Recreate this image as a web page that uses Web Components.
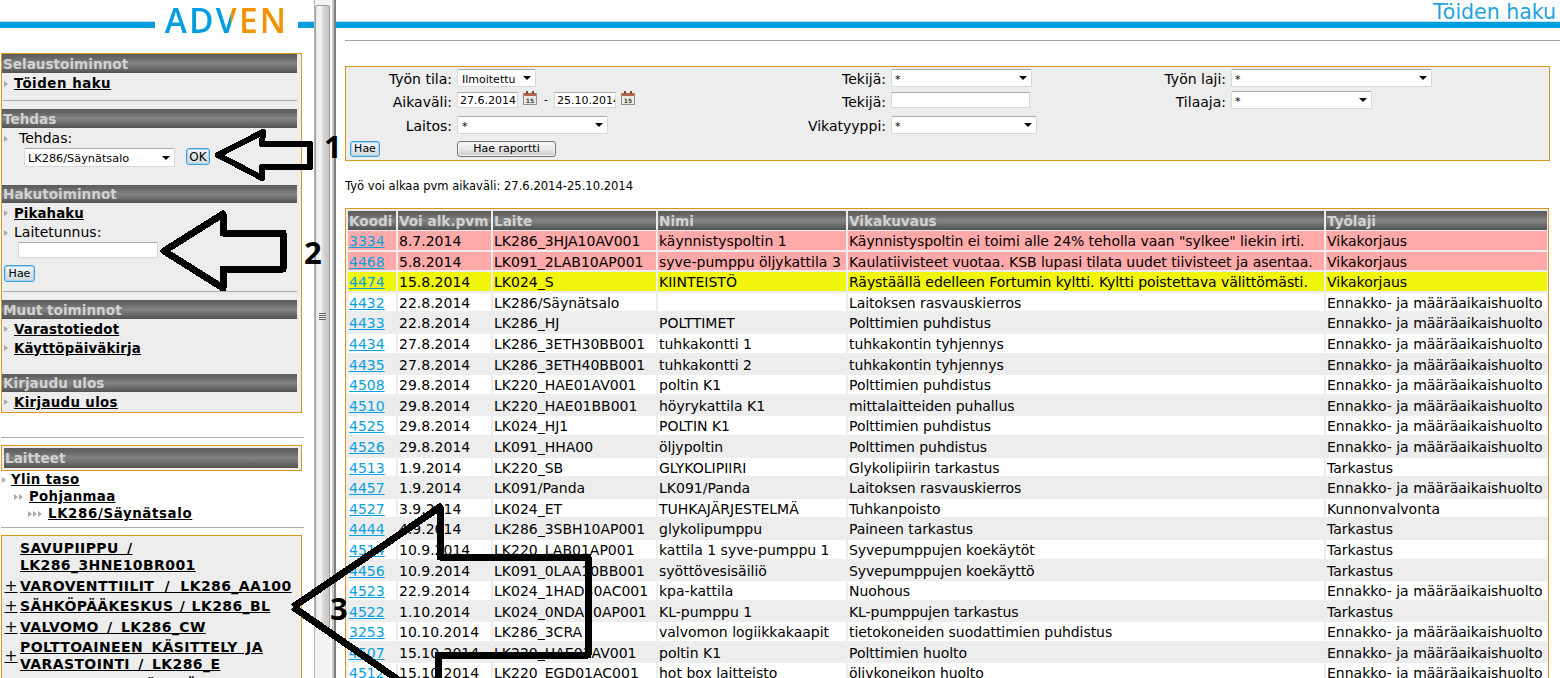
<!DOCTYPE html>
<html lang="fi"><head><meta charset="utf-8"><title>Töiden haku</title>
<style>
html,body{margin:0;padding:0;height:678px;overflow:hidden;background:#fff;font-family:"DejaVu Sans",Verdana,sans-serif;font-size:14px;color:#000}
</style></head><body>
<app-shell>
  <side-bar slot="side"></side-bar>
  <fake-scroll slot="scroll"></fake-scroll>
  <main-view slot="main"></main-view>
  <arrow-overlay slot="over"></arrow-overlay>
</app-shell>
<script>
function def(name,css,html){
  customElements.define(name,class extends HTMLElement{
    constructor(){super();this.attachShadow({mode:"open"});this._css=css;this._html=html;}
    connectedCallback(){if(!this._i){this._i=1;this.shadowRoot.innerHTML="<style>"+this._css+"</style>"+(typeof this._html==="function"?this._html(this):this._html);}}
  });
}
const HEAD=`linear-gradient(#5c5c5c,#666 20%,#858585 50%,#666 80%,#525252)`;
def("app-shell",`:host{display:grid;grid-template-columns:314px 22px 1fr;height:678px;overflow:hidden;position:relative}`,
 `<slot name="side"></slot><slot name="scroll"></slot><slot name="main"></slot><slot name="over"></slot>`);

def("panel-head",`:host{display:block;height:var(--h,19px);line-height:calc(var(--h,19px) + 1px);background:${HEAD};color:#d2d2d2;font-weight:bold;font-size:13.6px;padding-left:1px;white-space:nowrap;overflow:hidden;width:var(--w,294px);margin:var(--m,0 0 0 0)}`,`<slot></slot>`);

def("bullet-marks",`:host{display:inline-flex;gap:1px;vertical-align:middle}
 i{display:block;width:0;height:0;border-left:4px solid #aaa;border-top:3px solid transparent;border-bottom:3px solid transparent}`,
 el=>"<i></i>".repeat(+el.getAttribute("n")||1));

def("side-link",`:host{display:flex;box-sizing:border-box;align-items:center;height:var(--h,19px);padding-left:var(--p,2px);padding-top:var(--pt,1px);white-space:nowrap}
 bullet-marks{width:var(--bw,10px);flex:none}
 a{color:#000;font-weight:bold;font-size:13.33px;text-decoration:underline;letter-spacing:var(--ls,.35px)}`,
 el=>`<bullet-marks n="${el.getAttribute("n")||1}"></bullet-marks><a href="#"><slot></slot></a>`);

def("fake-select",`:host{display:flex;box-sizing:border-box;align-items:center;justify-content:space-between;width:var(--w,100px);height:var(--hh,18px);background:#fff;border:1px solid #d8d8d8;border-top-color:#aaa;border-radius:2px;font-size:var(--fs,11px);padding:0 4px 0 var(--pl,4px);color:#000;white-space:nowrap}
 span{margin-top:2px}
 i{width:0;height:0;border-top:4px solid #000;border-left:4px solid transparent;border-right:4px solid transparent;flex:none}`,`<span><slot></slot></span><i></i>`);

def("fake-input",`:host{display:block;box-sizing:border-box;width:var(--w,100px);height:16px;background:#fff;border:1px solid #d8d8d8;border-top-color:#aaa;font-size:11px;line-height:15px;padding-left:2px;overflow:hidden;white-space:nowrap;color:#000}`,`<slot></slot>`);

def("fake-button",`:host{display:inline-flex;box-sizing:border-box;align-items:center;justify-content:center;width:var(--w,30px);height:var(--hh,17px);border:1px solid #3f9fd8;border-radius:3px;box-shadow:inset 0 0 0 1px #a9d7f2;background:linear-gradient(#f2f7fb,#dfe6ea 50%,#cfd9df);font-size:11px;color:#000}
 :host([plain]){border-color:#777;box-shadow:inset 0 0 0 1px #f4f4f4;background:linear-gradient(#f7f7f7,#e8e8e8 50%,#c8c8c8)}`,`<slot></slot>`);

def("cal-icon",`:host{display:block;width:14px;height:14px;flex:none}svg{display:block}text{font:bold 6px "DejaVu Sans",sans-serif}`,
 `<svg width="14" height="14" viewBox="0 0 14 14"><rect x=".5" y="2.5" width="13" height="11" fill="#e9e9e4" stroke="#8f8f88"/><rect x="1" y="2" width="12" height="3" fill="#b5664a"/><rect x="3" y="0" width="2" height="3" fill="#7a4a38"/><rect x="9" y="0" width="2" height="3" fill="#7a4a38"/><text x="7" y="11.5" text-anchor="middle" fill="#444">15</text></svg>`);

def("side-rule",`:host{display:block;height:1px;background:#aaa;width:var(--w,294px);margin:var(--m,0)}`,``);

def("side-bar",`:host{display:block;width:314px;height:678px;overflow:hidden;font-size:14px}
 .top{display:flex;align-items:flex-start;height:53px}
 .bar{height:6px;background:#009ede;margin-top:22px;box-shadow:0 -1px 0 #bfe6ee}
 .logo{width:143px;text-align:center;font:600 33.5px/33px "Open Sans",sans-serif;letter-spacing:2.2px;height:44px;padding-top:4px;box-sizing:border-box;
   background:linear-gradient(90deg,#009ede 0,#009ede 76px,#f39200 76px) no-repeat;-webkit-background-clip:text;background-clip:text;color:transparent}
 .panel{box-sizing:border-box;margin-left:1px;width:301px;border:1px solid #e0951f;background:#ededed}
 .lab{height:18px;line-height:20px;white-space:nowrap}
 .row{display:flex;align-items:flex-start}
 .tree{height:200px;margin-top:7px;padding-top:4px;overflow:visible}
 .t{display:grid;grid-template-columns:18px 1fr;column-gap:0;align-items:center;margin-bottom:3.5px;line-height:17px;font-size:14px;letter-spacing:.4px;word-spacing:var(--ws,3px);font-weight:bold}
 .t u{display:block}
 .t b{text-align:center;font-weight:normal;font-size:15.5px;letter-spacing:0;text-decoration:underline;line-height:17px}
 `,
 `<div class="top"><div class="bar" style="width:155px"></div><div class="logo">ADVEN</div><div class="bar" style="width:16px"></div></div>
 <div class="panel" style="height:360px">
  <panel-head>Selaustoiminnot</panel-head>
  <side-link style="--h:20px;--ls:.55px">Töiden haku</side-link>
  <side-rule style="--m:7px 0 0 1px"></side-rule>
  <panel-head style="--m:8px 0 0 0">Tehdas</panel-head>
  <div class="lab" style="padding-left:2px;height:19px"><bullet-marks></bullet-marks><span style="margin-left:11px">Tehdas:</span></div>
  <div class="row" style="margin-top:1px;padding-left:22px"><fake-select style="--w:151px;--hh:19px;--pl:3px;--fs:11.3px">LK286/Säynätsalo</fake-select><fake-button style="--w:24px;margin-left:11px;font-size:12px">OK</fake-button></div>
  <panel-head style="--m:18px 0 0 0;--h:18px">Hakutoiminnot</panel-head>
  <side-link style="--ls:.1px">Pikahaku</side-link>
  <div class="lab" style="padding-left:2px"><bullet-marks></bullet-marks><span style="margin-left:6px">Laitetunnus:</span></div>
  <div style="padding:2px 0 0 16px"><fake-input style="--w:140px"></fake-input></div>
  <div style="padding:6px 0 0 2px"><fake-button style="--w:31px">Hae</fake-button></div>
  <side-rule style="--m:9px 0 0 1px"></side-rule>
  <panel-head style="--m:8px 0 0 0">Muut toiminnot</panel-head>
  <side-link style="--ls:.2px">Varastotiedot</side-link>
  <side-link style="--ls:.2px">Käyttöpäiväkirja</side-link>
  <panel-head style="--m:17px 0 0 0;--h:18px">Kirjaudu ulos</panel-head>
  <side-link>Kirjaudu ulos</side-link>
 </div>
 <side-rule style="--m:24px 0 0 1px;--w:303px"></side-rule>
 <div class="panel" style="height:26px;margin-top:7px;padding:2px 2px">
  <panel-head style="--w:293px;--h:20px">Laitteet</panel-head>
 </div>
 <side-link style="--h:17px;--pt:0px;--bw:9px;--p:2px">Ylin taso</side-link>
 <side-link n="2" style="--h:17px;--pt:0px;--bw:15px;--p:14px">Pohjanmaa</side-link>
 <side-link n="3" style="--h:17px;--pt:0px;--bw:20px;--p:28px;--ls:.65px">LK286/Säynätsalo</side-link>
 <side-rule style="--m:5px 0 0 1px;--w:303px"></side-rule>
 <div class="panel tree">
   <div class="t"><b></b><u>SAVUPIIPPU /<br>LK286_3HNE10BR001</u></div>
   <div class="t" style="--ws:5px"><b>+</b><u>VAROVENTTIILIT / LK286_AA100</u></div>
   <div class="t" style="--ws:1px"><b>+</b><u>SÄHKÖPÄÄKESKUS / LK286_BL</u></div>
   <div class="t"><b>+</b><u>VALVOMO / LK286_CW</u></div>
   <div class="t"><b>+</b><u>POLTTOAINEEN KÄSITTELY JA<br>VARASTOINTI / LK286_E</u></div>
   <div class="t"><b>+</b><u>TURBIINIT JA LÄMMÖNSIIRTIMET</u></div>
 </div>`);

def("fake-scroll",`:host{display:block;box-sizing:border-box;height:678px;width:22px;border-left:1px solid #b5b5b5;background:linear-gradient(90deg,#f2f2f2 0,#f2f2f2 15px,#fff 16px,#fff 17px,#c8c8c8 17px,#c8c8c8 19px,#808080 19px,#808080 21px);padding-top:5px}
 .thumb{box-sizing:border-box;width:15px;height:623px;border:1px solid #a0a0a0;border-radius:2px;background:linear-gradient(90deg,#e9e9e9,#f4f4f4 35%,#d4d4d4 60%,#c6c6c6);display:flex;align-items:center;justify-content:center}
 .grip{width:7px;height:7px;background:repeating-linear-gradient(#666 0,#666 1px,#e8e8e8 1px,#e8e8e8 2px)}`,
 `<div class="thumb"><div class="grip"></div></div>`);

const ROWS=[
["3334","8.7.2014","LK286_3HJA10AV001","käynnistyspoltin 1",'Käynnistyspoltin ei toimi alle 24% teholla vaan "sylkee" liekin irti.',"Vikakorjaus","r"],
["4468","5.8.2014","LK091_2LAB10AP001","syve-pumppu öljykattila 3","Kaulatiivisteet vuotaa. KSB lupasi tilata uudet tiivisteet ja asentaa.","Vikakorjaus","r"],
["4474","15.8.2014","LK024_S","KIINTEISTÖ","Räystäällä edelleen Fortumin kyltti. Kyltti poistettava välittömästi.","Vikakorjaus","y"],
["4432","22.8.2014","LK286/Säynätsalo","","Laitoksen rasvauskierros","E","w"],
["4433","22.8.2014","LK286_HJ","POLTTIMET","Polttimien puhdistus","E","g"],
["4434","27.8.2014","LK286_3ETH30BB001","tuhkakontti 1","tuhkakontin tyhjennys","E","w"],
["4435","27.8.2014","LK286_3ETH40BB001","tuhkakontti 2","tuhkakontin tyhjennys","E","g"],
["4508","29.8.2014","LK220_HAE01AV001","poltin K1","Polttimien puhdistus","E","w"],
["4510","29.8.2014","LK220_HAE01BB001","höyrykattila K1","mittalaitteiden puhallus","E","g"],
["4525","29.8.2014","LK024_HJ1","POLTIN K1","Polttimien puhdistus","E","w"],
["4526","29.8.2014","LK091_HHA00","öljypoltin","Polttimen puhdistus","E","g"],
["4513","1.9.2014","LK220_SB","GLYKOLIPIIRI","Glykolipiirin tarkastus","Tarkastus","w"],
["4457","1.9.2014","LK091/Panda","LK091/Panda","Laitoksen rasvauskierros","E","g"],
["4527","3.9.2014","LK024_ET","TUHKAJÄRJESTELMÄ","Tuhkanpoisto","Kunnonvalvonta","w"],
["4444","4.9.2014","LK286_3SBH10AP001","glykolipumppu","Paineen tarkastus","Tarkastus","g"],
["4514","10.9.2014","LK220_LAB01AP001","kattila 1 syve-pumppu 1","Syvepumppujen koekäytöt","Tarkastus","w"],
["4456","10.9.2014","LK091_0LAA10BB001","syöttövesisäiliö","Syvepumppujen koekäyttö","Tarkastus","g"],
["4523","22.9.2014","LK024_1HAD30AC001","kpa-kattila","Nuohous","E","w"],
["4522","1.10.2014","LK024_0NDA10AP001","KL-pumppu 1","KL-pumppujen tarkastus","Tarkastus","g"],
["3253","10.10.2014","LK286_3CRA","valvomon logiikkakaapit","tietokoneiden suodattimien puhdistus","E","w"],
["4507","15.10.2014","LK220_HAE01AV001","poltin K1","Polttimien huolto","E","g"],
["4512","15.10.2014","LK220_EGD01AC001","hot box laitteisto","ölivkoneikon huolto","E","w"]
];
def("job-table",`:host{display:block;box-sizing:border-box;width:1204px;height:480px;border:1px solid #e0951f;background:#ededed;padding:2px 1px 0 2px;overflow:hidden}
 .g{display:grid;grid-template-columns:48px 93px 163px 188px 476px 221px;gap:2px;grid-template-rows:18px;grid-auto-rows:18.6px}
 .c{white-space:nowrap;overflow:hidden;line-height:21px;padding-left:1px;font-size:14px;box-sizing:border-box}
 .d{letter-spacing:-.06px}
 .h{height:19px;line-height:20px;background:${HEAD};color:#d2d2d2;font-weight:bold;font-size:13.6px;padding-left:1px}
 .r{background:#ffa9a9}.y{background:#f1f50c}.w{background:#fff}.g2{background:#ededed}
 a{color:#08a0e0;text-decoration:underline}`,
 ()=>{const esc=s=>s.replace(/&/g,"&amp;");
  let h='<div class="g">'+["Koodi","Voi alk.pvm","Laite","Nimi","Vikakuvaus","Työlaji"].map(t=>`<div class="c h">${t}</div>`).join("");
  for(const r of ROWS){const k=r[6]==="g"?"g2":r[6];const t=r[5]==="E"?"Ennakko- ja määräaikaishuolto":r[5];
   h+=`<div class="c ${k}"><a href="#">${r[0]}</a></div>`+[r[1],r[2],r[3]].map(x=>`<div class="c ${k}">${esc(x)}</div>`).join("")+`<div class="c d ${k}">${esc(r[4])}</div><div class="c ${k}">${esc(t)}</div>`;}
  return h+"</div>";});

def("search-form",`:host{display:block;box-sizing:border-box;width:1205px;height:95px;border:1px solid #e0951f;background:#ededed;padding:2px 0 0 0;font-size:14px}
 .g{display:grid;grid-template-columns:111px 334px 100px 240px 100px 1fr;grid-template-rows:23px 24px 23px 16px;align-items:start}
 .l{text-align:right;line-height:20px;padding-right:5px;white-space:nowrap}
 .d{display:flex;align-items:flex-start}`,
 `<div class="g">
  <div class="l">Työn tila:</div><div><fake-select style="--w:79px;--pl:4px">Ilmoitettu</fake-select></div>
  <div class="l">Tekijä:</div><div><fake-select style="--w:141px;--pl:3px">*</fake-select></div>
  <div class="l">Työn laji:</div><div><fake-select style="--w:201px;--pl:3px">*</fake-select></div>
  <div class="l">Aikaväli:</div>
  <div class="d"><fake-input style="--w:61px">27.6.2014</fake-input><cal-icon style="margin:-1px 0 0 5px"></cal-icon><span style="margin:0 6px 0 7px;line-height:16px;font-size:11px">-</span><fake-input style="--w:62px">25.10.2014</fake-input><cal-icon style="margin:-1px 0 0 5px"></cal-icon></div>
  <div class="l">Tekijä:</div><div><fake-input style="--w:139px"></fake-input></div>
  <div class="l">Tilaaja:</div><div style="margin-top:-1px"><fake-select style="--w:141px;--pl:3px">*</fake-select></div>
  <div class="l">Laitos:</div><div><fake-select style="--w:151px;--pl:4px">*</fake-select></div>
  <div class="l">Vikatyyppi:</div><div><fake-select style="--w:146px;--pl:3px">*</fake-select></div>
  <div></div><div></div>
  <div style="padding-left:4px"><fake-button style="--w:30px;--hh:16px">Hae</fake-button></div>
  <div><fake-button plain style="--w:99px;--hh:16px">Hae raportti</fake-button></div>
 </div>`);

def("main-view",`:host{display:block;height:678px;overflow:hidden}
 .title{height:22px;text-align:right;color:#1ea3e2;font-size:20.5px;line-height:24px;padding-right:4px;box-sizing:border-box}
 .bar{height:6px;background:#009ede;box-shadow:0 -1px 0 #bfe6ee}
 .rule{height:1px;background:#a5a5a5;margin:12px 0 0 9px}
 .body{padding-left:9px}
 .note{font-size:11.55px;line-height:16px;margin-top:17px;height:30px;box-sizing:border-box}`,
 `<div class="title">Töiden haku</div><div class="bar"></div><div class="rule"></div>
 <div class="body" style="padding-top:25px"><search-form></search-form>
 <div class="note">Työ voi alkaa pvm aikaväli: 27.6.2014-25.10.2014</div>
 <job-table></job-table></div>`);

def("arrow-overlay",`:host{position:absolute;left:0;top:0;width:1560px;height:678px;pointer-events:none;overflow:hidden}
 svg{position:absolute;left:0;top:0}
 span{position:absolute;font:bold 31px/31px "Open Sans",sans-serif;color:#000}`,
 `<svg width="1560" height="678" fill="none" stroke="#000" stroke-width="6" stroke-linejoin="round" shape-rendering="crispEdges">
  <path d="M218 155 263 132 262 144H310V167H262V178Z"/>
  <path d="M164 251 223 214V233H283V269H223V288Z" stroke-width="7"/>
  <path d="M293 607 440 507V557H588V655H438V690M293 607 420 695" stroke-width="7"/>
 </svg>
 <span style="left:324px;top:131px">1</span><span style="left:304px;top:237px">2</span><span style="left:330px;top:593px">3</span>`);
</script>
</body></html>
